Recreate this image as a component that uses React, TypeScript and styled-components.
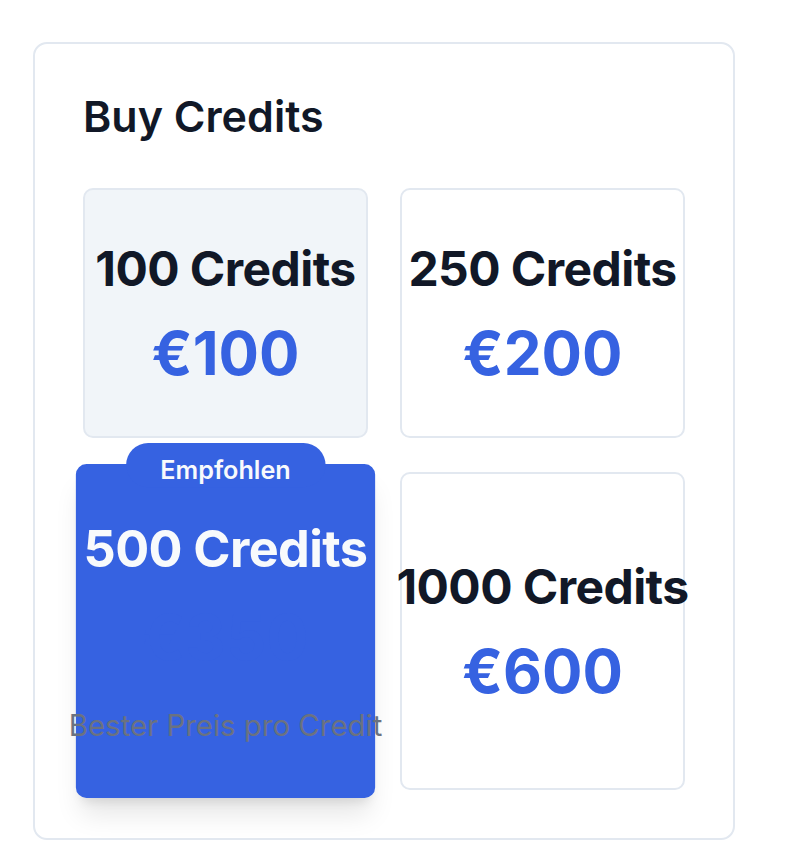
import React from "react";
import styled, { createGlobalStyle, css } from "styled-components";

const Global = createGlobalStyle`
  html, body { margin: 0; padding: 0; background: #ffffff; }
  body { font-family: Inter, "Noto Sans", sans-serif; color: #0f172a; }
  * { box-sizing: border-box; }
`;

const BLUE = "#3662e1";

const Page = styled.div`
  padding: 42px 0 0 33px;
`;

const Card = styled.section`
  width: 702px;
  border: 2px solid #e2e8f0;
  border-radius: 14px;
  background: #ffffff;
  padding: 48px;
`;

const Title = styled.h2`
  margin: 0 0 48px;
  font-size: 43px;
  line-height: 48px;
  font-weight: 600;
  letter-spacing: 0;
  color: #111827;
`;

const Grid = styled.div`
  display: grid;
  grid-template-columns: repeat(2, minmax(0, 1fr));
  column-gap: 32px;
  row-gap: 34px;
`;

const Option = styled.div<{ $selected?: boolean; $featured?: boolean }>`
  position: relative;
  display: flex;
  flex-direction: column;
  align-items: center;
  justify-content: center;
  min-width: 0;
  padding: 47px 24px;
  border: 2px solid #e2e8f0;
  border-radius: 10px;
  background: #ffffff;
  text-align: center;
  ${(p) =>
    p.$selected &&
    css`
      background: #f1f5f9;
    `}
  ${(p) =>
    p.$featured &&
    css`
      background: ${BLUE};
      border-color: ${BLUE};
      color: #f8fafc;
      transform: scale(1.05);
      box-shadow: 0 20px 25px -5px rgba(0, 0, 0, 0.1),
        0 8px 10px -6px rgba(0, 0, 0, 0.1);
    `}
`;

const Amount = styled.div<{ $light?: boolean }>`
  font-size: 48px;
  line-height: 64px;
  font-weight: 700;
  letter-spacing: -0.012em;
  white-space: nowrap;
  color: ${(p) => (p.$light ? "#f8fafc" : "#111827")};
`;

const Price = styled.div`
  margin-top: 16px;
  font-size: 60px;
  line-height: 72px;
  font-weight: 700;
  white-space: nowrap;
  color: ${BLUE};
`;

const Note = styled.div`
  margin-top: 28px;
  font-size: 28px;
  line-height: 40px;
  font-weight: 400;
  color: #6b7280;
  white-space: nowrap;
`;

const Badge = styled.span`
  position: absolute;
  top: -1px;
  left: 50%;
  transform: translate(-50%, -50%);
  padding: 10px 33px 0;
  border-radius: 9999px;
  background: ${BLUE};
  color: #f8fafc;
  font-size: 24px;
  line-height: 32px;
  font-weight: 600;
  white-space: nowrap;
`;

export default function App() {
  return (
    <>
      <Global />
      <Page>
        <Card>
          <Title>Buy Credits</Title>
          <Grid>
            <Option $selected>
              <Amount>100 Credits</Amount>
              <Price>€100</Price>
            </Option>
            <Option>
              <Amount>250 Credits</Amount>
              <Price>€200</Price>
            </Option>
            <Option $featured>
              <Badge>Empfohlen</Badge>
              <Amount $light>500 Credits</Amount>
              <Price>€350</Price>
              <Note>Bester Preis pro Credit</Note>
            </Option>
            <Option>
              <Amount>1000 Credits</Amount>
              <Price>€600</Price>
            </Option>
          </Grid>
        </Card>
      </Page>
    </>
  );
}
